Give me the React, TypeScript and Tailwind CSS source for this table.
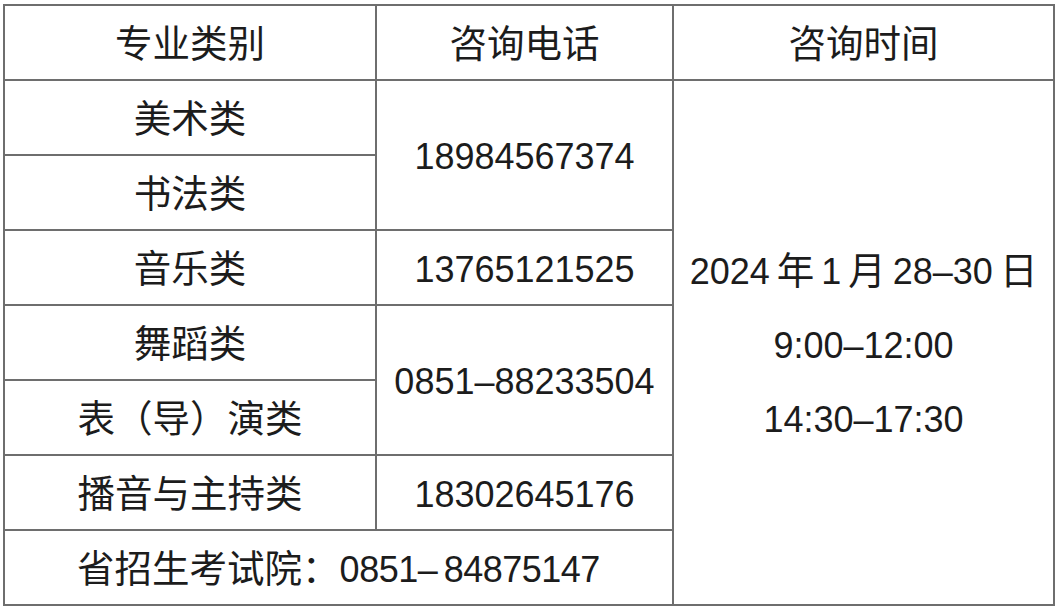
import React from "react";

const cell = "border-2 border-[#6e6e6e] text-center align-middle p-0 pt-[4px]";
const cj = "text-[37.5px]";

export default function App() {
  return (
    <div className="w-[1059px] h-[608px] bg-white pt-[4px] pl-[3px]">
      <table
        className="table-fixed border-collapse w-[1050px] text-[36px] text-[#1c1c1c]"
        style={{ fontFamily: '"Liberation Sans", "Noto Sans CJK SC", sans-serif' }}
      >
        <colgroup>
          <col className="w-[372px]" />
          <col className="w-[297px]" />
          <col className="w-[381px]" />
        </colgroup>
        <tbody>
          <tr className="h-[75px]">
            <td className={`${cell} ${cj}`}>专业类别</td>
            <td className={`${cell} ${cj}`}>咨询电话</td>
            <td className={`${cell} ${cj}`}>咨询时间</td>
          </tr>
          <tr className="h-[75px]">
            <td className={`${cell} ${cj}`}>美术类</td>
            <td className={cell} rowSpan={2}>18984567374</td>
            <td className={cell} rowSpan={7}>
              <div className="leading-[74px] pt-[2px]">
                <div className="[word-spacing:-3px]">
                  2024 <span className={cj}>年</span> 1 <span className={cj}>月</span> 28–30{" "}
                  <span className={cj}>日</span>
                </div>
                <div>9:00–12:00</div>
                <div>14:30–17:30</div>
              </div>
            </td>
          </tr>
          <tr className="h-[75px]">
            <td className={`${cell} ${cj}`}>书法类</td>
          </tr>
          <tr className="h-[75px]">
            <td className={`${cell} ${cj}`}>音乐类</td>
            <td className={cell}>13765121525</td>
          </tr>
          <tr className="h-[75px]">
            <td className={`${cell} ${cj}`}>舞蹈类</td>
            <td className={cell} rowSpan={2}>0851–88233504</td>
          </tr>
          <tr className="h-[75px]">
            <td className={`${cell} ${cj}`}>表（导）演类</td>
          </tr>
          <tr className="h-[75px]">
            <td className={`${cell} ${cj}`}>播音与主持类</td>
            <td className={cell}>18302645176</td>
          </tr>
          <tr className="h-[75px]">
            <td className={cell} colSpan={2}>
              <span className={cj}>省招生考试院：</span>
              <span className="tracking-[-0.5px] [word-spacing:-3px]">0851– 84875147</span>
            </td>
          </tr>
        </tbody>
      </table>
    </div>
  );
}
